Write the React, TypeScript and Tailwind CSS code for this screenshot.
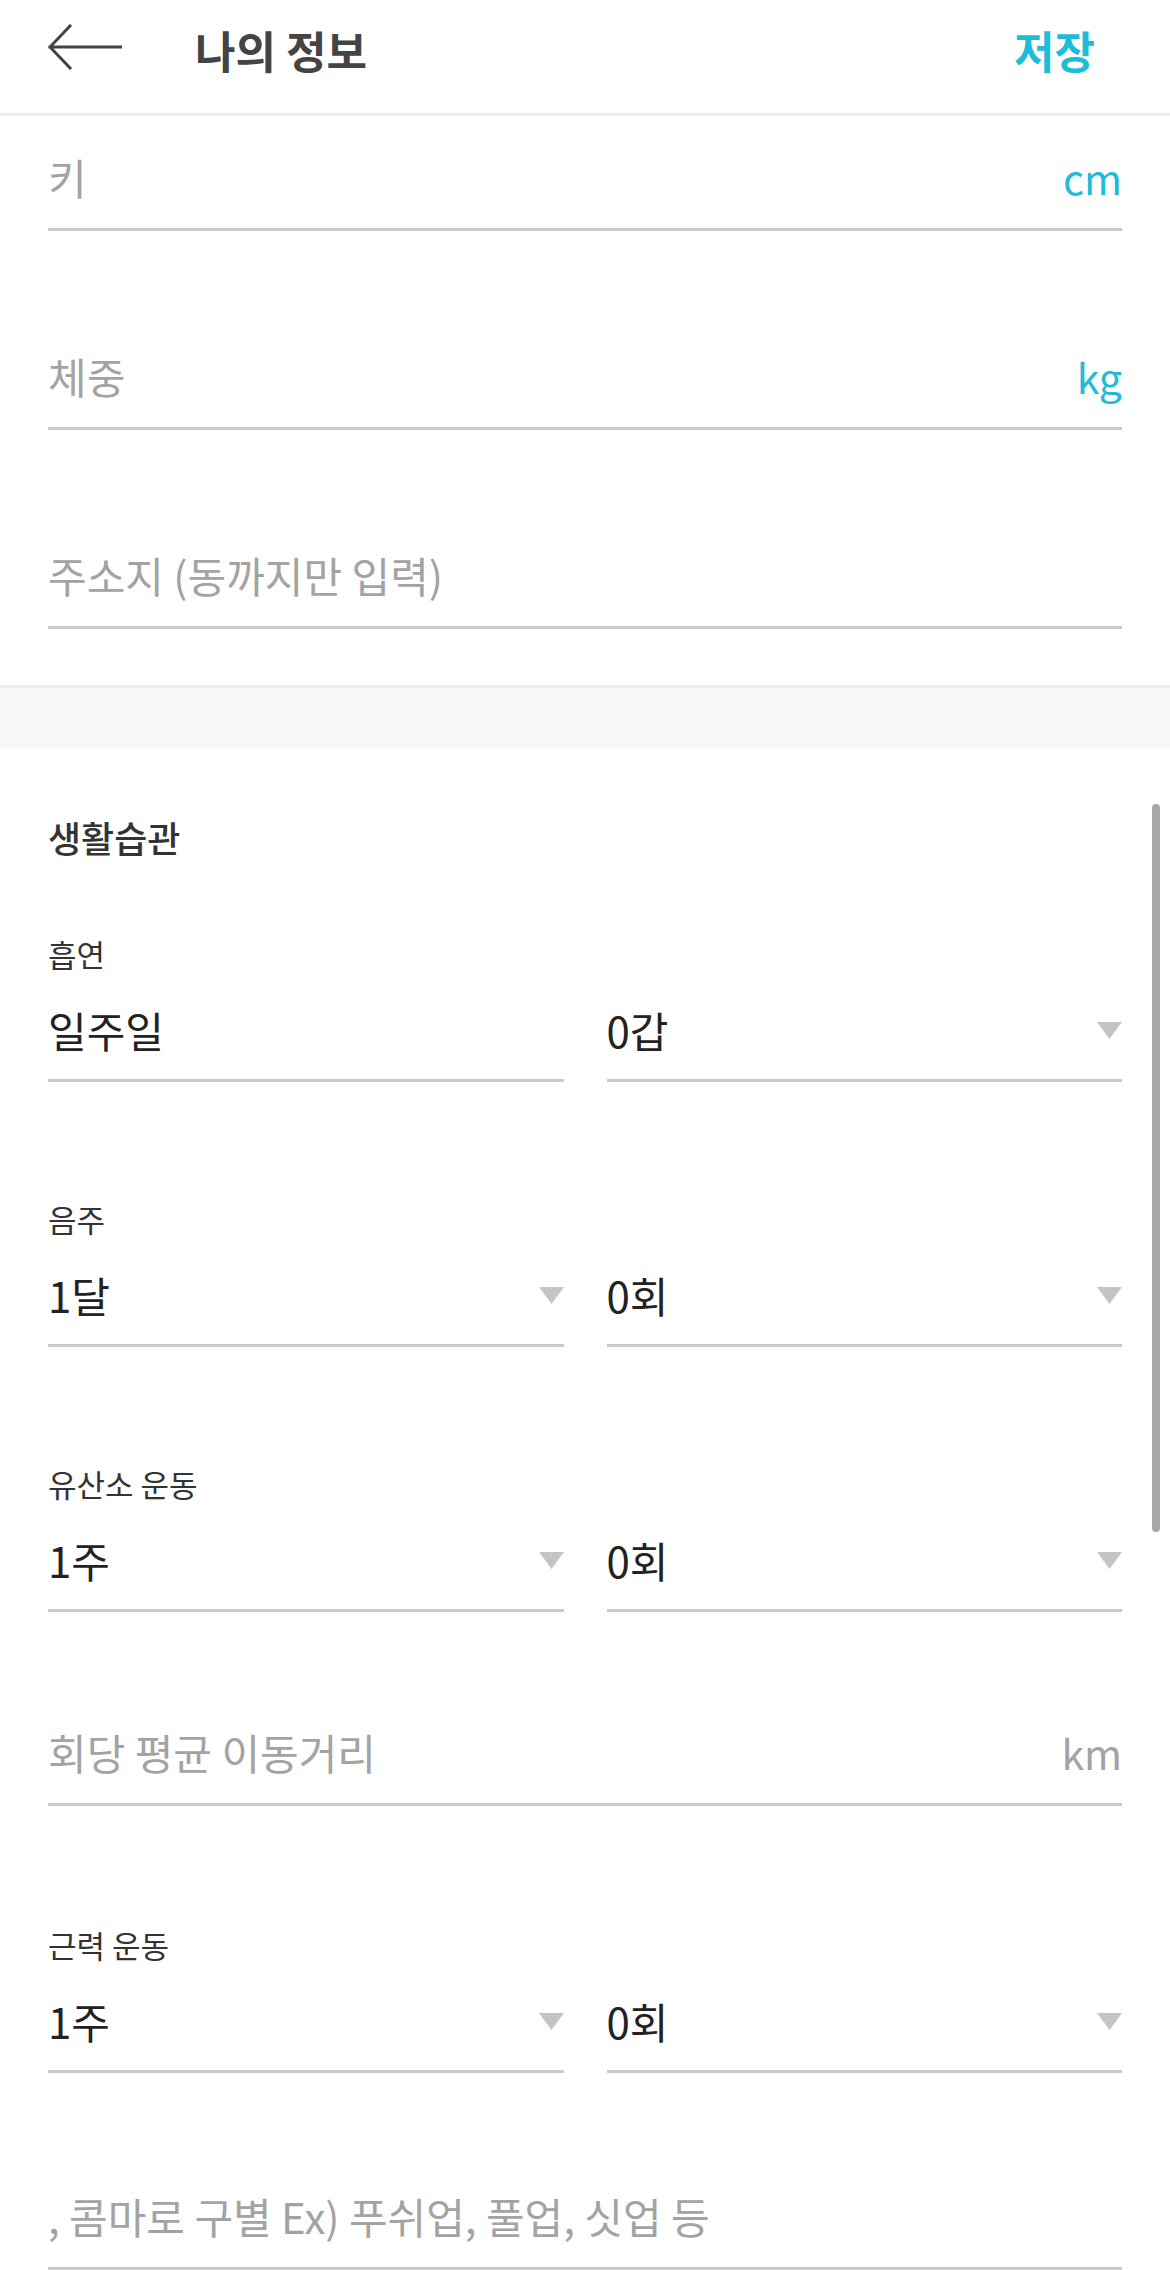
import React from 'react';

const font = { fontFamily: '"Noto Sans CJK KR", "Noto Sans", sans-serif' };

const Caret = () => (
  <svg width="25" height="17" viewBox="0 0 25 17" className="shrink-0">
    <path d="M0 0 H25 L12.5 17 Z" fill="#c4c4c4" />
  </svg>
);

interface TextFieldProps {
  placeholder: string;
  unit?: string;
  unitColor?: string;
  className?: string;
}

const TextField: React.FC<TextFieldProps> = ({ placeholder, unit, unitColor = 'text-[#1ebcd9]', className = '' }) => (
  <div className={`flex items-baseline justify-between border-b-[3px] border-[#cacaca] pb-[23px] ${className}`}>
    <span className="text-[42px] leading-[56px] text-[#a3a3a3]">{placeholder}</span>
    {unit && <span className={`text-[41px] leading-[56px] ${unitColor}`}>{unit}</span>}
  </div>
);

const SelectBox: React.FC<{ value: string; caret?: boolean }> = ({ value, caret = true }) => (
  <div className="flex flex-1 items-center justify-between border-b-[3px] border-[#cacaca] pb-[21px]">
    <span className="text-[42px] leading-[56px] text-[#222222]">{value}</span>
    {caret && <Caret />}
  </div>
);

interface HabitRowProps {
  label: string;
  left: string;
  right: string;
  leftCaret?: boolean;
  className?: string;
}

const HabitRow: React.FC<HabitRowProps> = ({ label, left, right, leftCaret = true, className = '' }) => (
  <div className={className}>
    <div className="text-[31px] leading-[40px] text-[#333333]">{label}</div>
    <div className="mt-[28px] flex gap-[43px]">
      <SelectBox value={left} caret={leftCaret} />
      <SelectBox value={right} />
    </div>
  </div>
);

export default function App() {
  return (
    <div style={font} className="relative h-[2270px] w-[1170px] overflow-hidden bg-white">
      {/* Header */}
      <header className="flex h-[116px] items-center border-b-[3px] border-[#eeeeee] pl-[48px] pr-[75px]">
        <svg width="74" height="46" viewBox="0 0 74 46" className="-mt-[20px]">
          <path d="M73 23 H2 M22 2 L2 23 L22 44" fill="none" stroke="#444444" strokeWidth="3" strokeLinecap="square" />
        </svg>
        <h1 className="-mt-[14px] ml-[73px] flex-1 text-[44px] font-bold text-[#444444]">나의 정보</h1>
        <button className="-mt-[14px] text-[44px] font-bold text-[#1ebcd9]">저장</button>
      </header>

      {/* Body info */}
      <section className="px-[48px] pt-[33px]">
        <TextField placeholder="키" unit="cm" />
        <TextField placeholder="체중" unit="kg" className="mt-[117px]" />
        <TextField placeholder="주소지 (동까지만 입력)" className="mt-[117px]" />
      </section>

      <div className="mt-[56px] h-[63px] border-t-[3px] border-[#eeeeee] bg-[#f8f8f8]" />

      {/* Habits */}
      <section className="px-[48px] pt-[66px]">
        <h2 className="text-[36px] font-medium leading-[46px] text-[#333333]">생활습관</h2>
        <HabitRow label="흡연" left="일주일" right="0갑" leftCaret={false} className="mt-[74px]" />
        <HabitRow label="음주" left="1달" right="0회" className="mt-[117px]" />
        <HabitRow label="유산소 운동" left="1주" right="0회" className="mt-[117px]" />
        <TextField placeholder="회당 평균 이동거리" unit="km" unitColor="text-[#a3a3a3]" className="mt-[112px]" />
        <HabitRow label="근력 운동" left="1주" right="0회" className="mt-[119px]" />
        <TextField placeholder=", 콤마로 구별 Ex) 푸쉬업, 풀업, 싯업 등" className="mt-[115px]" />
      </section>

      {/* Scrollbar */}
      <div className="absolute left-[1152px] top-[804px] h-[728px] w-[8px] rounded-full bg-[#a8a8a8]" />
    </div>
  );
}
